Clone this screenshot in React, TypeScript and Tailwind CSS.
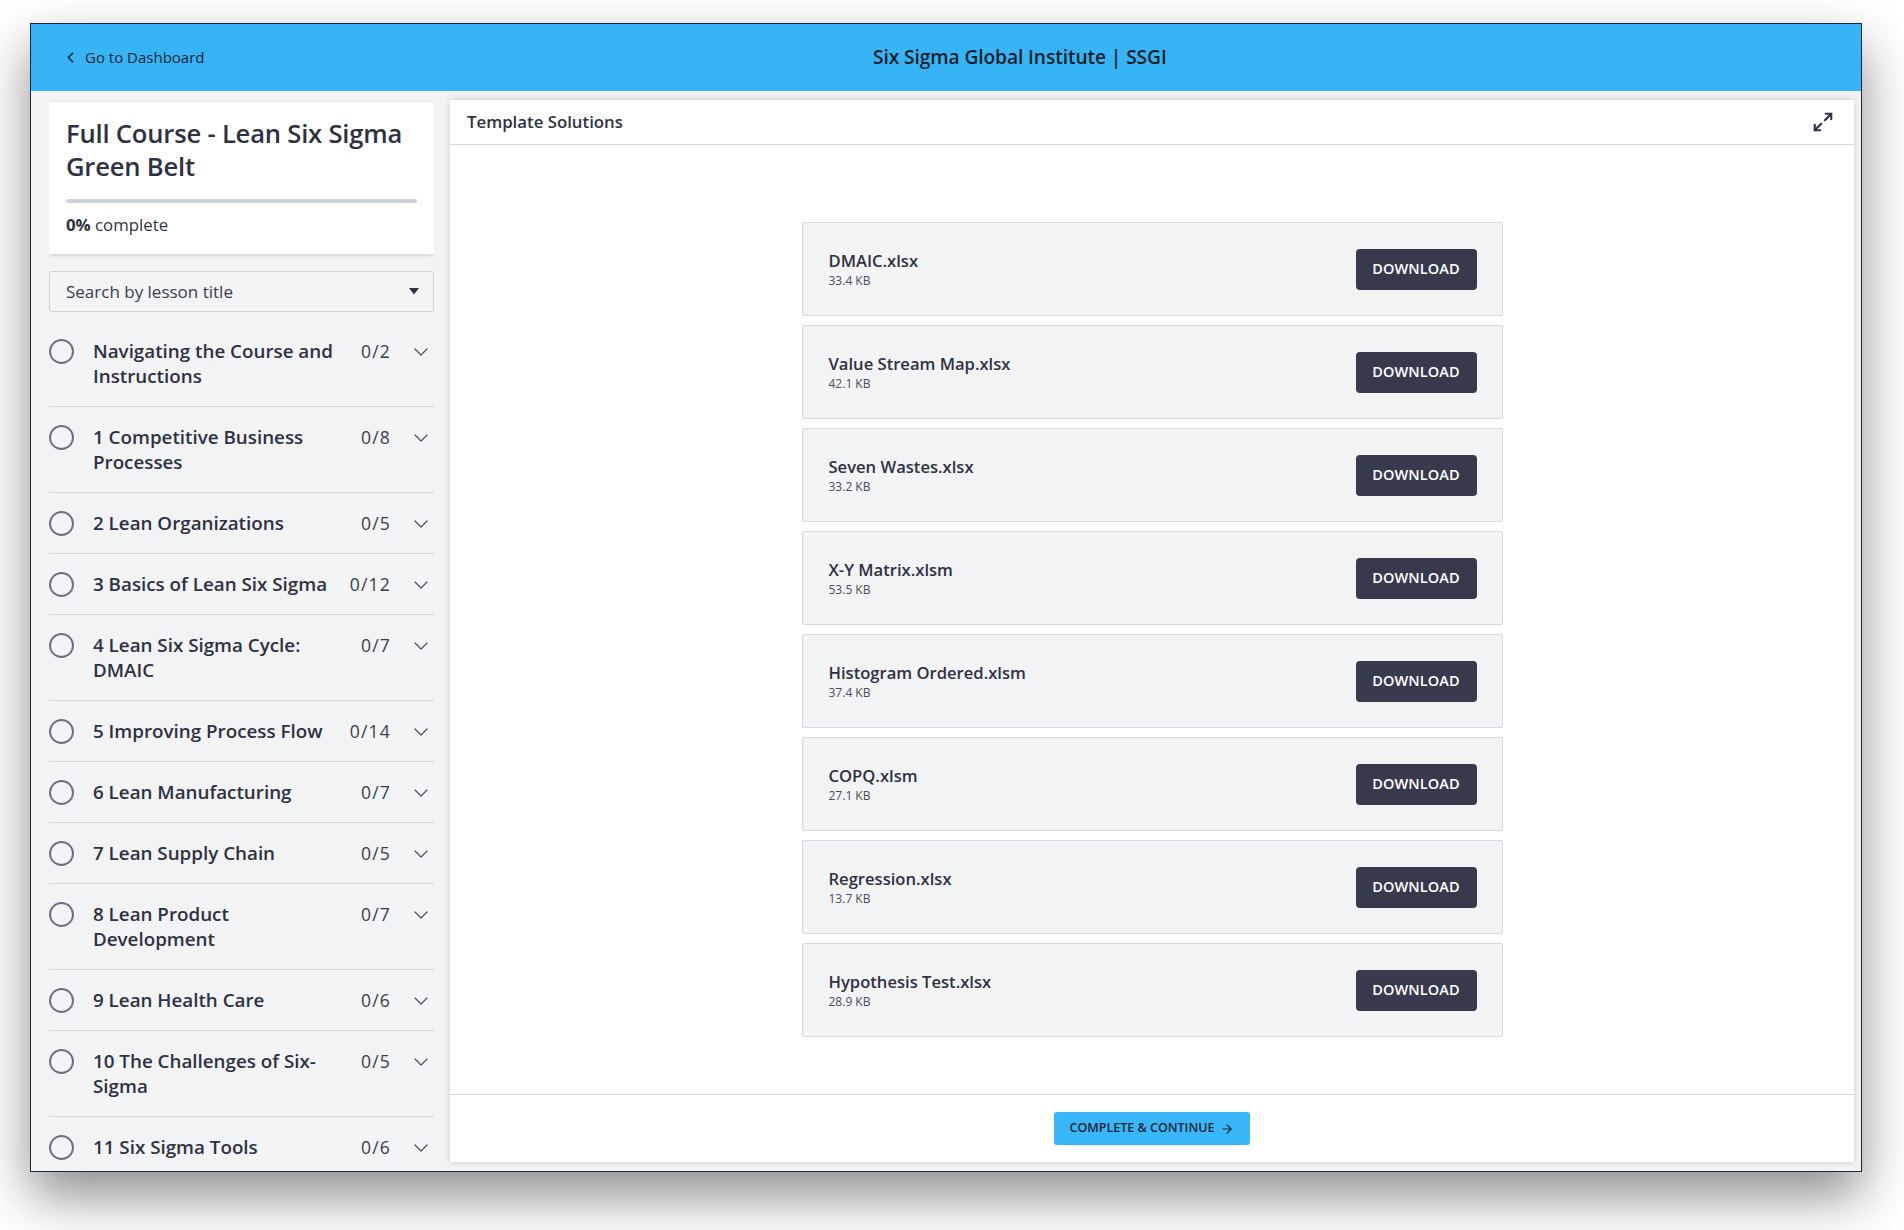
import React from "react";
import { ChevronLeft, Maximize2, ArrowRight } from "lucide-react";

const lessons: { title: string; count: string }[] = [
  { title: "Navigating the Course and Instructions", count: "0/2" },
  { title: "1 Competitive Business Processes", count: "0/8" },
  { title: "2 Lean Organizations", count: "0/5" },
  { title: "3 Basics of Lean Six Sigma", count: "0/12" },
  { title: "4 Lean Six Sigma Cycle: DMAIC", count: "0/7" },
  { title: "5 Improving Process Flow", count: "0/14" },
  { title: "6 Lean Manufacturing", count: "0/7" },
  { title: "7 Lean Supply Chain", count: "0/5" },
  { title: "8 Lean Product Development", count: "0/7" },
  { title: "9 Lean Health Care", count: "0/6" },
  { title: "10 The Challenges of Six-Sigma", count: "0/5" },
  { title: "11 Six Sigma Tools", count: "0/6" },
];

const files: { name: string; size: string }[] = [
  { name: "DMAIC.xlsx", size: "33.4 KB" },
  { name: "Value Stream Map.xlsx", size: "42.1 KB" },
  { name: "Seven Wastes.xlsx", size: "33.2 KB" },
  { name: "X-Y Matrix.xlsm", size: "53.5 KB" },
  { name: "Histogram Ordered.xlsm", size: "37.4 KB" },
  { name: "COPQ.xlsm", size: "27.1 KB" },
  { name: "Regression.xlsx", size: "13.7 KB" },
  { name: "Hypothesis Test.xlsx", size: "28.9 KB" },
];

function Chevron() {
  return (
    <svg width="14" height="8" viewBox="0 0 14 8" fill="none" className="block">
      <polyline points="1,1 7,7 13,1" stroke="#50535f" strokeWidth="1.3" fill="none" strokeLinecap="round" strokeLinejoin="round" />
    </svg>
  );
}

export default function App() {
  return (
    <div className="w-[1904px] h-[1230px] bg-white overflow-hidden font-['Open_Sans',sans-serif] text-[#2e3142]">
      <div className="pt-[23px] pl-[30px]">
        <div className="w-[1832px] h-[1149px] flex flex-col bg-[#f2f3f5] border border-[#1d2636] shadow-[0_24px_50px_rgba(0,0,0,0.45)] overflow-hidden">
          {/* Header */}
          <div className="h-[67px] shrink-0 bg-[#36b4f6] flex items-center pl-[31px]">
            <div className="flex items-center w-[172px] text-[#1f2433]">
              <ChevronLeft size={17} strokeWidth={2.2} />
              <span className="ml-[6px] text-[15px] leading-none">Go to Dashboard</span>
            </div>
            <div className="ml-[639px] text-[19.2px] font-semibold text-[#1a1f2c] tracking-[-0.1px]">
              Six Sigma Global Institute | SSGI
            </div>
          </div>

          {/* Body */}
          <div className="flex-1 flex min-h-0 pl-[18px] pr-[7px]">
            {/* Sidebar */}
            <div className="w-[385px] shrink-0 pt-[11px] overflow-hidden">
              <div className="bg-white rounded-[2px] shadow-[0_1px_4px_rgba(0,0,0,0.18)] px-[17px] pt-[15px] pb-[17px]">
                <h1 className="text-[25.6px] leading-[33px] font-semibold text-[#2e3142] tracking-[-0.2px]">
                  Full Course - Lean Six Sigma Green Belt
                </h1>
                <div className="mt-[16px] h-[4px] rounded-full bg-[#cdd1d8]" />
                <div className="mt-[10px] text-[16.8px] leading-[24px]">
                  <span className="font-bold">0%</span> complete
                </div>
              </div>

              <div className="mt-[17px] h-[41px] border border-[#cfd3d9] rounded-[3px] bg-[#f3f4f6] flex items-center justify-between pl-[16px] pr-[14px]">
                <span className="text-[17px] text-[#3a3d4b]">Search by lesson title</span>
                <svg width="10" height="7" viewBox="0 0 10 7" className="block">
                  <polygon points="0,0 10,0 5,6.5" fill="#2e3142" />
                </svg>
              </div>

              <div className="mt-[9px]">
                {lessons.map((l, i) => (
                  <div key={i} className="flex items-start pt-[18px] pb-[17px] border-b border-[#d5d8de]">
                    <div className="w-[25px] h-[25px] shrink-0 rounded-full border-2 border-[#6f7280]" />
                    <div className="ml-[19px] w-[250px] text-[18.8px] leading-[25px] font-semibold text-[#2e3142]">
                      {l.title}
                    </div>
                    <div className="w-[48px] text-right text-[17.5px] leading-[25px] tracking-[1.2px] text-[#3a3d4b]">
                      {l.count}
                    </div>
                    <div className="ml-[23px] h-[25px] flex items-center">
                      <Chevron />
                    </div>
                  </div>
                ))}
              </div>
            </div>

            {/* Main panel */}
            <div className="flex-1 ml-[16px] my-[9px] bg-white shadow-[0_0_6px_rgba(0,0,0,0.18)] flex flex-col">
              <div className="h-[45px] shrink-0 border-b border-[#d5d8de] flex items-center justify-between pl-[17px] pr-[20px]">
                <span className="text-[16.8px] font-semibold text-[#2e3142]">Template Solutions</span>
                <Maximize2 size={22} strokeWidth={2.3} color="#2d3047" />
              </div>

              <div className="flex-1 flex flex-col items-center pt-[77px]">
                {files.map((f, i) => (
                  <div key={i} className="w-[701px] h-[94px] mb-[9px] bg-[#f2f3f5] border border-[#d6d9df] rounded-[2px] flex items-center justify-between pl-[26px] pr-[25px]">
                    <div className="flex flex-col">
                      <span className="text-[16.6px] leading-[22px] font-semibold text-[#2e3142]">{f.name}</span>
                      <span className="text-[12px] leading-[17px] text-[#4a4d5a]">{f.size}</span>
                    </div>
                    <button className="w-[121px] h-[41px] rounded-[4px] bg-[#373a4d] text-white text-[14.5px] font-semibold tracking-[0.1px]">
                      DOWNLOAD
                    </button>
                  </div>
                ))}
              </div>

              <div className="h-[68px] shrink-0 border-t border-[#d5d8de] flex justify-center pt-[17px]">
                <button className="h-[33px] px-[16px] rounded-[3px] bg-[#38b6f8] flex items-center text-[12.5px] font-semibold text-[#1d2533]">
                  COMPLETE &amp; CONTINUE
                  <ArrowRight size={14} strokeWidth={2} className="ml-[6px]" />
                </button>
              </div>
            </div>
          </div>
        </div>
      </div>
    </div>
  );
}
